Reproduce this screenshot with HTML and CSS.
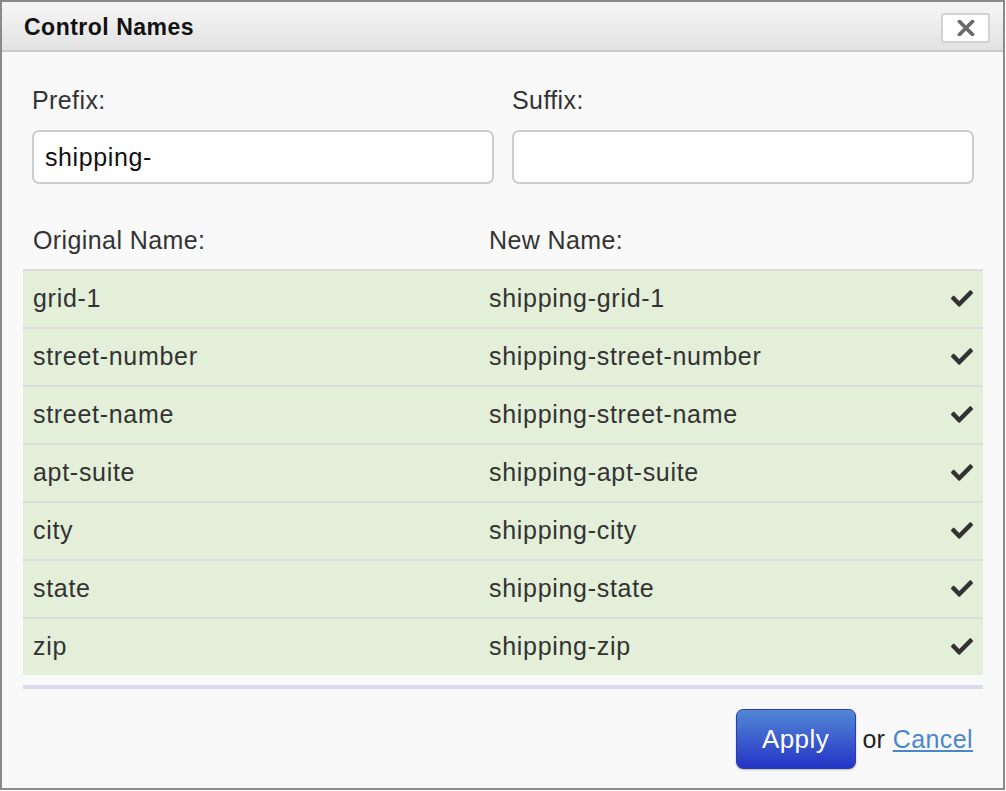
FILE: index.html
```html
<!DOCTYPE html>
<html>
<head>
<meta charset="utf-8">
<link rel="stylesheet" href="styles.css">
</head>
<body>
<div class="dialog">
  <div class="titlebar">
    <span class="title">Control Names</span>
    <button class="close" aria-label="Close">
      <svg width="18" height="16" viewBox="0 0 18 16"><path d="M2.5 1.5 L15.5 14.5 M15.5 1.5 L2.5 14.5" stroke="#6a6a6a" stroke-width="3.8" stroke-linecap="round"/></svg>
    </button>
  </div>
  <div class="content">
    <div class="fields">
      <div class="field">
        <label class="label">Prefix:</label>
        <div class="input">shipping-</div>
      </div>
      <div class="field">
        <label class="label">Suffix:</label>
        <div class="input"></div>
      </div>
    </div>
    <div class="table">
      <div class="thead">
        <div class="th">Original Name:</div>
        <div class="th th2">New Name:</div>
      </div>
      <div class="row"><div class="c1">grid-1</div><div class="c2">shipping-grid-1</div><div class="c3"><svg class="check" viewBox="0 60 512 392"><path d="M173.898 439.404l-166.4-166.4c-9.997-9.997-9.997-26.206 0-36.204l36.203-36.204c9.997-9.998 26.207-9.998 36.204 0L192 312.69 432.095 72.596c9.997-9.997 26.207-9.997 36.204 0l36.203 36.204c9.997 9.997 9.997 26.206 0 36.204l-294.4 294.401c-9.998 9.997-26.207 9.997-36.204-.001z" fill="#333"/></svg></div></div>
      <div class="row"><div class="c1">street-number</div><div class="c2">shipping-street-number</div><div class="c3"><svg class="check" viewBox="0 60 512 392"><path d="M173.898 439.404l-166.4-166.4c-9.997-9.997-9.997-26.206 0-36.204l36.203-36.204c9.997-9.998 26.207-9.998 36.204 0L192 312.69 432.095 72.596c9.997-9.997 26.207-9.997 36.204 0l36.203 36.204c9.997 9.997 9.997 26.206 0 36.204l-294.4 294.401c-9.998 9.997-26.207 9.997-36.204-.001z" fill="#333"/></svg></div></div>
      <div class="row"><div class="c1">street-name</div><div class="c2">shipping-street-name</div><div class="c3"><svg class="check" viewBox="0 60 512 392"><path d="M173.898 439.404l-166.4-166.4c-9.997-9.997-9.997-26.206 0-36.204l36.203-36.204c9.997-9.998 26.207-9.998 36.204 0L192 312.69 432.095 72.596c9.997-9.997 26.207-9.997 36.204 0l36.203 36.204c9.997 9.997 9.997 26.206 0 36.204l-294.4 294.401c-9.998 9.997-26.207 9.997-36.204-.001z" fill="#333"/></svg></div></div>
      <div class="row"><div class="c1">apt-suite</div><div class="c2">shipping-apt-suite</div><div class="c3"><svg class="check" viewBox="0 60 512 392"><path d="M173.898 439.404l-166.4-166.4c-9.997-9.997-9.997-26.206 0-36.204l36.203-36.204c9.997-9.998 26.207-9.998 36.204 0L192 312.69 432.095 72.596c9.997-9.997 26.207-9.997 36.204 0l36.203 36.204c9.997 9.997 9.997 26.206 0 36.204l-294.4 294.401c-9.998 9.997-26.207 9.997-36.204-.001z" fill="#333"/></svg></div></div>
      <div class="row"><div class="c1">city</div><div class="c2">shipping-city</div><div class="c3"><svg class="check" viewBox="0 60 512 392"><path d="M173.898 439.404l-166.4-166.4c-9.997-9.997-9.997-26.206 0-36.204l36.203-36.204c9.997-9.998 26.207-9.998 36.204 0L192 312.69 432.095 72.596c9.997-9.997 26.207-9.997 36.204 0l36.203 36.204c9.997 9.997 9.997 26.206 0 36.204l-294.4 294.401c-9.998 9.997-26.207 9.997-36.204-.001z" fill="#333"/></svg></div></div>
      <div class="row"><div class="c1">state</div><div class="c2">shipping-state</div><div class="c3"><svg class="check" viewBox="0 60 512 392"><path d="M173.898 439.404l-166.4-166.4c-9.997-9.997-9.997-26.206 0-36.204l36.203-36.204c9.997-9.998 26.207-9.998 36.204 0L192 312.69 432.095 72.596c9.997-9.997 26.207-9.997 36.204 0l36.203 36.204c9.997 9.997 9.997 26.206 0 36.204l-294.4 294.401c-9.998 9.997-26.207 9.997-36.204-.001z" fill="#333"/></svg></div></div>
      <div class="row"><div class="c1">zip</div><div class="c2">shipping-zip</div><div class="c3"><svg class="check" viewBox="0 60 512 392"><path d="M173.898 439.404l-166.4-166.4c-9.997-9.997-9.997-26.206 0-36.204l36.203-36.204c9.997-9.998 26.207-9.998 36.204 0L192 312.69 432.095 72.596c9.997-9.997 26.207-9.997 36.204 0l36.203 36.204c9.997 9.997 9.997 26.206 0 36.204l-294.4 294.401c-9.998 9.997-26.207 9.997-36.204-.001z" fill="#333"/></svg></div></div>
    </div>
    <div class="divider"></div>
    <div class="footer">
      <button class="apply">Apply</button>
      <span class="or">or</span>
      <a class="cancel" href="#">Cancel</a>
    </div>
  </div>
</div>
</body>
</html>
```
FILE: styles.css
```css
* { box-sizing: border-box; }
html, body { margin: 0; padding: 0; background: #ffffff; }
body { font-family: "Liberation Sans", Arial, sans-serif; color: #333; }

.dialog {
  width: 1005px;
  height: 790px;
  border: 2px solid #8a8a8a;
  background: #f9f9f9;
  display: flex;
  flex-direction: column;
}

.titlebar {
  height: 50px;
  border-bottom: 2px solid #c9c9c9;
  background: linear-gradient(#f6f6f6, #e2e2e2);
  display: flex;
  align-items: center;
  justify-content: space-between;
  padding: 0 13px 0 22px;
}
.title {
  font-weight: bold;
  font-size: 23px;
  letter-spacing: 0.5px;
  color: #111;
  line-height: 1;
  margin-top: 2px;
}
.close {
  width: 49px;
  height: 30px;
  margin-top: 3px;
  background: #fff;
  border: 2px solid #d2d2d2;
  border-radius: 3px;
  padding: 0;
  display: flex;
  align-items: center;
  justify-content: center;
}

.content {
  padding: 0 20px 0 21px;
}

.fields {
  display: grid;
  grid-template-columns: 462px 462px;
  column-gap: 18px;
  padding: 33px 0 0 9px;
}
.label {
  display: block;
  font-size: 25px;
  letter-spacing: 0.4px;
  line-height: 30px;
  color: #333;
  height: 30px;
  margin-bottom: 15px;
}
.input {
  height: 54px;
  border: 2px solid #cdcdcd;
  border-radius: 7px;
  background: #fff;
  padding: 0 11px;
  font-size: 25px;
  letter-spacing: 0.6px;
  line-height: 50px;
  color: #111;
}

.table { margin-top: 41px; }
.thead {
  display: grid;
  grid-template-columns: 466px 1fr;
  height: 44px;
}
.th {
  padding-left: 10px;
  font-size: 25px;
  letter-spacing: 0.4px;
  line-height: 30px;
  color: #333;
}
.th2 { padding-left: 0; }
.row {
  display: grid;
  grid-template-columns: 466px 1fr auto;
  align-items: center;
  height: 58px;
  border-top: 2px solid #dcdcdc;
  padding-bottom: 2px;
  background: #e3efd8;
  font-size: 25px;
  letter-spacing: 0.7px;
  color: #333;
}
.c1 { padding-left: 10px; }
.c3 { padding-right: 10px; display: flex; align-items: center; }
.check { width: 22px; height: 17px; display: block; }

.divider {
  height: 4px;
  margin-top: 10px;
  background: #dcdbeb;
}

.footer {
  display: flex;
  align-items: center;
  justify-content: flex-end;
  padding: 20px 10px 0 0;
}
.apply {
  width: 120px;
  height: 60px;
  border: 1px solid #2b3ea4;
  border-radius: 7px;
  background: linear-gradient(#5487d6, #2334c6);
  color: #fff;
  font-family: "Liberation Sans", Arial, sans-serif;
  font-size: 26px;
  letter-spacing: 0.4px;
  padding: 0;
  box-shadow: 0 1px 2px rgba(0,0,0,0.25);
}
.or {
  font-size: 25px;
  color: #222;
  margin-left: 7px;
  margin-right: 8px;
}
.cancel {
  font-size: 25px;
  letter-spacing: 0.4px;
  color: #4a86d0;
  text-decoration: underline;
}
```
